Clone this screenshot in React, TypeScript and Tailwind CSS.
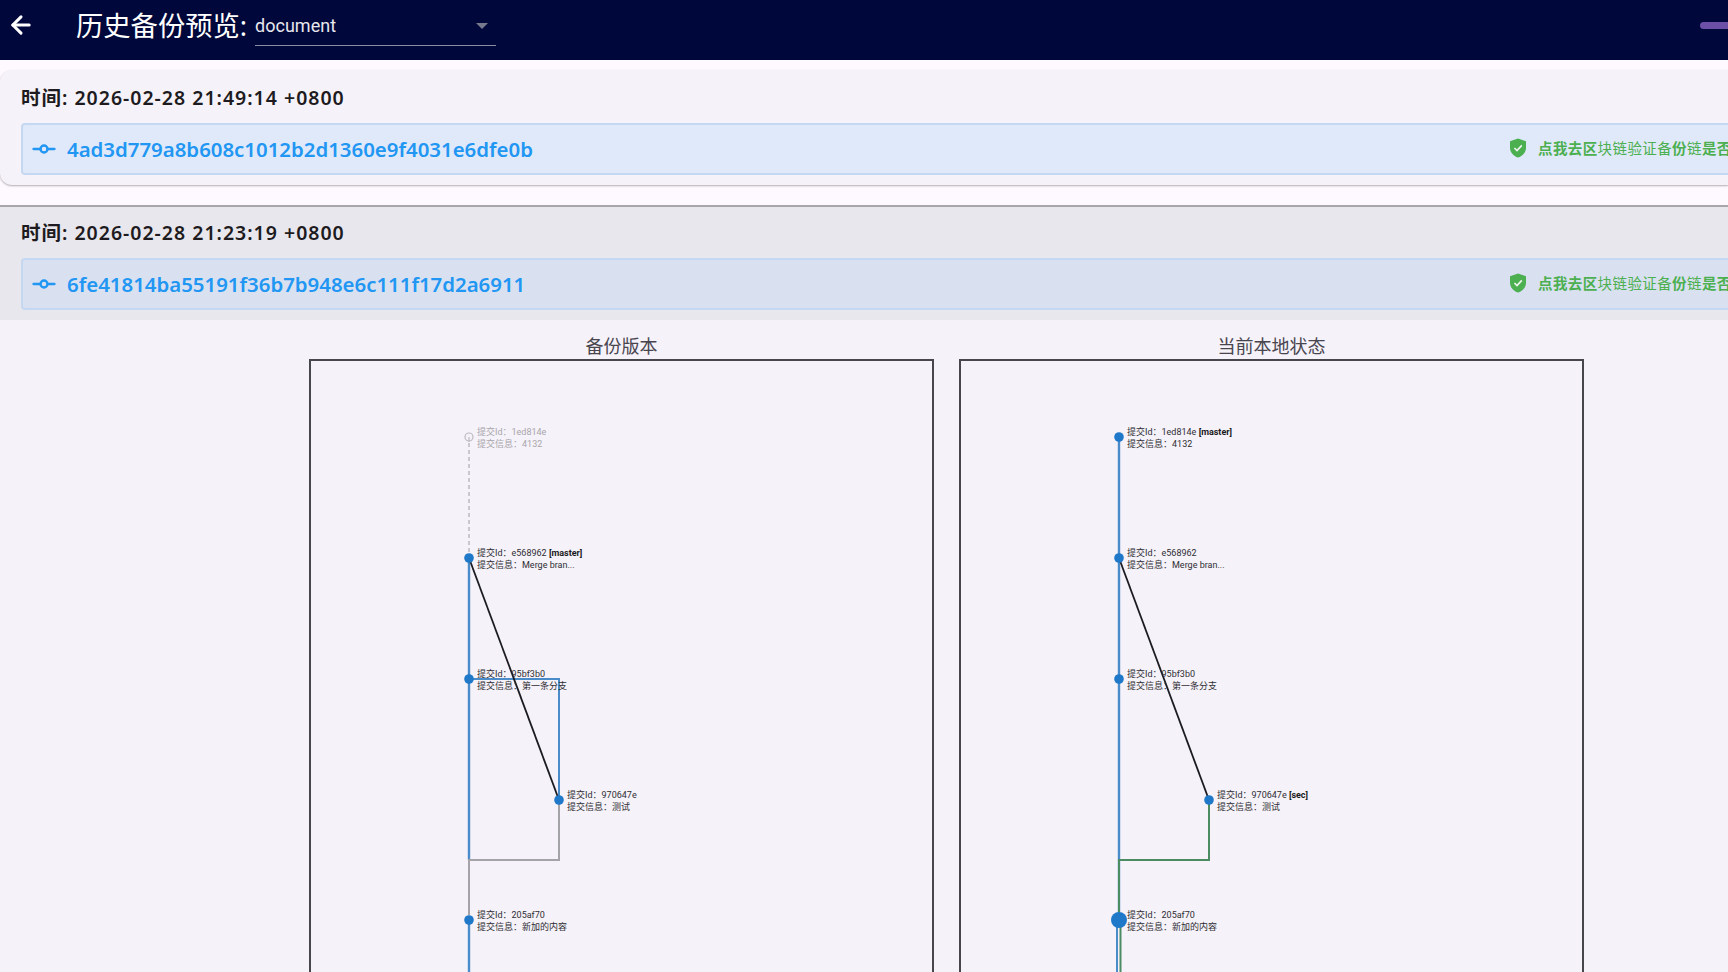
import { ArrowLeft, GitCommitHorizontal } from "lucide-react";

const FONT = "font-['Noto_Sans','Noto_Sans_CJK_SC',sans-serif]";

interface CommitNode {
  y: number;
  x: number;
  id: string;
  message: string;
  branch?: string;
  muted?: boolean;
}

const backupNodes: CommitNode[] = [
  { x: 160, y: 78, id: "1ed814e", message: "4132", muted: true },
  { x: 160, y: 199, id: "e568962", message: "Merge bran...", branch: "master" },
  { x: 160, y: 320, id: "95bf3b0", message: "第一条分支" },
  { x: 250, y: 441, id: "970647e", message: "测试" },
  { x: 160, y: 561, id: "205af70", message: "新加的内容" },
];

const localNodes: CommitNode[] = [
  { x: 160, y: 78, id: "1ed814e", message: "4132", branch: "master" },
  { x: 160, y: 199, id: "e568962", message: "Merge bran..." },
  { x: 160, y: 320, id: "95bf3b0", message: "第一条分支" },
  { x: 250, y: 441, id: "970647e", message: "测试", branch: "sec" },
  { x: 160, y: 561, id: "205af70", message: "新加的内容" },
];

function BackupRow({ time, hash, selected }: { time: string; hash: string; selected?: boolean }) {
  return (
    <div
      className={`h-[115px] pl-[21px] ${
        selected
          ? "bg-[#e9e7ee] border-t-2 border-[#a8a5ab] mt-[20px] pt-[12px]"
          : "bg-[#f5f2f9] mt-[10px] pt-[14px] rounded-tl-xl rounded-bl-xl shadow-[0_1px_2px_rgba(0,0,0,0.3)]"
      }`}
    >
      <div className="text-[19.5px] leading-[28px] font-semibold tracking-[1px] text-[#1d1b20]">
        时间: {time}
      </div>
      <div
        className={`mt-[11px] h-[52px] w-[1800px] flex items-center border-2 rounded-[4px] border-[#c5d8f1] ${
          selected ? "bg-[#d9e1f1]" : "bg-[#e0e9f9]"
        }`}
      >
        <GitCommitHorizontal size={28} strokeWidth={2} className="ml-[7px] -mt-[1px] text-[#2196f3]" />
        <span className="ml-[9px] text-[20.4px] font-semibold text-[#2196f3]">{hash}</span>
        <div className="absolute left-[1509px] flex items-center">
          <svg width="18" height="20" viewBox="0 0 18 20" className="-mt-[2px]">
            <path d="M9 0.5L1 3.2V9.5C1 14.3 4.4 18.3 9 19.5C13.6 18.3 17 14.3 17 9.5V3.2Z" fill="#4caf50" />
            <path d="M5.4 10L8 12.5L12.8 7.4" fill="none" stroke="#eef5ee" strokeWidth="1.7" />
          </svg>
          <span className="ml-[11px] text-[14.5px] tracking-[0.4px] text-[#4caf50] whitespace-nowrap">
            <span className="font-bold">点我去区</span>
            块链验证备<span className="font-bold">份</span>链<span className="font-bold">是否</span>
          </span>
        </div>
      </div>
    </div>
  );
}

function CommitGraph({ title, nodes, local }: { title: string; nodes: CommitNode[]; local?: boolean }) {
  const blue = "#4a8bc9";
  const gray = "#a3a3a8";
  const green = "#4c8c63";
  return (
    <div className="w-[625px]">
      <div className="h-[34px] text-center text-[18px] leading-[42px] text-[#49454f]">{title}</div>
      <div className="relative h-[700px] border-2 border-[#47464d] overflow-hidden box-border">
        <svg width="625" height="700" className="absolute -left-[2px] -top-[2px]" fill="none">
          {local ? (
            <>
              <path d="M160 78V561" stroke={blue} strokeWidth="2.4" />
              <path d="M250 441V501H160V561" stroke={green} strokeWidth="2" />
              <path d="M158 561V700" stroke={blue} strokeWidth="2" />
              <path d="M161.5 561V700" stroke={green} strokeWidth="2" />
            </>
          ) : (
            <>
              <path d="M160 84V199" stroke="#bdb9bf" strokeWidth="1.5" strokeDasharray="4 3" />
              <path d="M160 199V501" stroke={blue} strokeWidth="2.4" />
              <path d="M160 320H250V441" stroke={blue} strokeWidth="2" />
              <path d="M250 441V501H160V556" stroke={gray} strokeWidth="2" />
              <path d="M160 561V700" stroke={blue} strokeWidth="2.4" />
            </>
          )}
          <path d="M160 199L250 441" stroke="#1b1b22" strokeWidth="1.8" />
          {nodes.map((node) =>
            node.muted ? (
              <g key={node.id} stroke="#bdb9bf" strokeWidth="1.2">
                <circle cx={node.x} cy={node.y} r="4" fill="#f5f2f9" />
                <path d={`M${node.x} ${node.y}V${node.y + 5}`} />
              </g>
            ) : (
              <circle
                key={node.id}
                cx={node.x}
                cy={node.y}
                r={local && node.y === 561 ? 8 : 4.8}
                fill="#1f78c8"
              />
            )
          )}
        </svg>
        {nodes.map((node) => (
          <div
            key={node.id}
            className={`absolute font-['Roboto','Noto_Sans_CJK_SC',sans-serif] text-[9px] leading-[11.8px] whitespace-nowrap ${
              node.muted ? "text-[#a9a6ac]" : "text-[#2f2e33]"
            }`}
            style={{ left: node.x + 6, top: node.y - 12 }}
          >
            <div>
              提交Id：{node.id}
              {node.branch && <span className="font-bold text-[#1b1b22]"> [{node.branch}]</span>}
            </div>
            <div>提交信息：{node.message}</div>
          </div>
        ))}
      </div>
    </div>
  );
}

export default function App() {
  return (
    <div className={`relative h-[972px] w-[1728px] overflow-hidden bg-[#fef8ff] ${FONT}`}>
      <header className="relative h-[60px] bg-[#00073a] flex items-start text-white">
        <ArrowLeft size={28} strokeWidth={2.6} className="ml-[7px] mt-[11px]" />
        <h1 className="ml-[41px] mt-[8px] text-[27.3px] leading-[36px]">历史备份预览:</h1>
        <div className="relative ml-[8px] mt-0 h-[46px] w-[241px] border-b border-[#8a8ca3]">
          <span className="font-['Roboto',sans-serif] text-[18px] leading-[51px] text-[#e8e8ee]">document</span>
          <div className="absolute right-[8px] top-[23px] w-0 h-0 border-x-[6px] border-x-transparent border-t-[6px] border-t-[#77798c]" />
        </div>
        <div className="absolute right-0 top-[22px] h-[7px] w-[28px] rounded-l-full bg-[#6c50a8]" />
      </header>
      <BackupRow time="2026-02-28 21:49:14 +0800" hash="4ad3d779a8b608c1012b2d1360e9f4031e6dfe0b" />
      <BackupRow selected time="2026-02-28 21:23:19 +0800" hash="6fe41814ba55191f36b7b948e6c111f17d2a6911" />
      <div className="h-[652px] bg-[#f5f2f9] pl-[309px] flex gap-[25px] pt-[5px]">
        <CommitGraph title="备份版本" nodes={backupNodes} />
        <CommitGraph title="当前本地状态" nodes={localNodes} local />
      </div>
    </div>
  );
}
